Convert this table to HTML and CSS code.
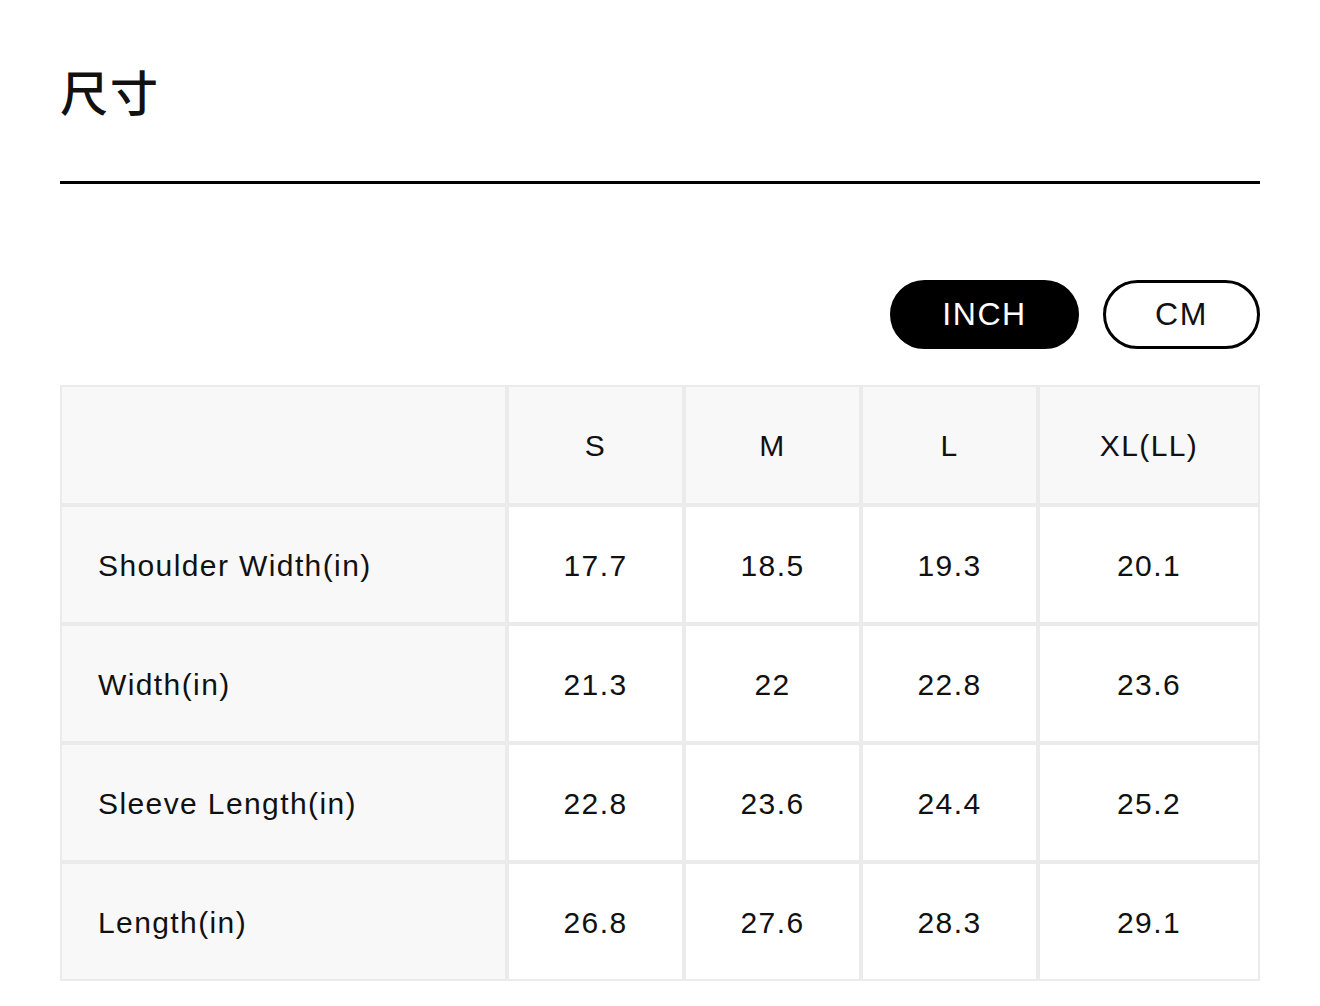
FILE: index.html
```html
<!DOCTYPE html>
<html lang="zh">
    <head>
        <meta charset="UTF-8">
        <title>尺寸</title>
        <link rel="stylesheet" href="styles.css">
    </head>
    <body>
        <div class="size-guide">
            <h1 class="title">尺寸</h1>

            <div class="unit-switch">
                <button class="unit active">INCH</button>
                <button class="unit">CM</button>
            </div>

            <table class="size-table">
                <colgroup>
                    <col class="col-label">
                    <col class="col-size">
                    <col class="col-size">
                    <col class="col-size">
                    <col class="col-wide">
                </colgroup>
                <thead>
                    <tr>
                        <th></th>
                        <th>S</th>
                        <th>M</th>
                        <th>L</th>
                        <th>XL(LL)</th>
                    </tr>
                </thead>
                <tbody>
                    <tr>
                        <th>Shoulder Width(in)</th>
                        <td>17.7</td>
                        <td>18.5</td>
                        <td>19.3</td>
                        <td>20.1</td>
                    </tr>
                    <tr>
                        <th>Width(in)</th>
                        <td>21.3</td>
                        <td>22</td>
                        <td>22.8</td>
                        <td>23.6</td>
                    </tr>
                    <tr>
                        <th>Sleeve Length(in)</th>
                        <td>22.8</td>
                        <td>23.6</td>
                        <td>24.4</td>
                        <td>25.2</td>
                    </tr>
                    <tr>
                        <th>Length(in)</th>
                        <td>26.8</td>
                        <td>27.6</td>
                        <td>28.3</td>
                        <td>29.1</td>
                    </tr>
                </tbody>
            </table>
        </div>
    </body>
</html>
```

FILE: styles.css
```css
body {
    margin: 0;
    background: #fff;
    font-family: "Liberation Sans", Arial, "Noto Sans CJK SC", sans-serif;
    color: #111;
}
.size-guide {
    width: 1200px;
    margin: 0 auto;
    padding-top: 60px;
}
.title {
    margin: 0;
    font-family: "Noto Sans CJK SC", sans-serif;
    font-size: 48px;
    font-weight: 500;
    line-height: 60px;
    letter-spacing: 2px;
    padding-bottom: 61px;
    border-bottom: 3px solid #000;
}
.unit-switch {
    display: flex;
    justify-content: flex-end;
    gap: 24px;
    margin-top: 96px;
    margin-bottom: 36px;
}
.unit {
    height: 69px;
    border: 3px solid #000;
    border-radius: 35px;
    background: #fff;
    color: #111;
    font-family: "Liberation Sans", Arial, sans-serif;
    font-size: 32px;
    letter-spacing: 1.6px;
    padding: 0;
    cursor: pointer;
}
.unit.active {
    width: 189px;
    background: #000;
    color: #fff;
}
.unit:not(.active) {
    width: 157px;
}
.size-table {
    width: 1200px;
    border-collapse: separate;
    border-spacing: 0;
    table-layout: fixed;
    font-size: 30px;
    letter-spacing: 1.4px;
    color: #111;
}
.col-label { width: 447px; }
.col-size { width: 177px; }
.col-wide { width: 222px; }
.size-table th,
.size-table td {
    border: 2px solid #ebebeb;
    height: 113px;
    padding: 2px 0 0;
    text-align: center;
    font-weight: normal;
    background: #fff;
}
.size-table thead th {
    height: 114px;
    background: #f8f8f8;
}
.size-table tbody th {
    text-align: left;
    padding-left: 36px;
    background: #f8f8f8;
}
```
